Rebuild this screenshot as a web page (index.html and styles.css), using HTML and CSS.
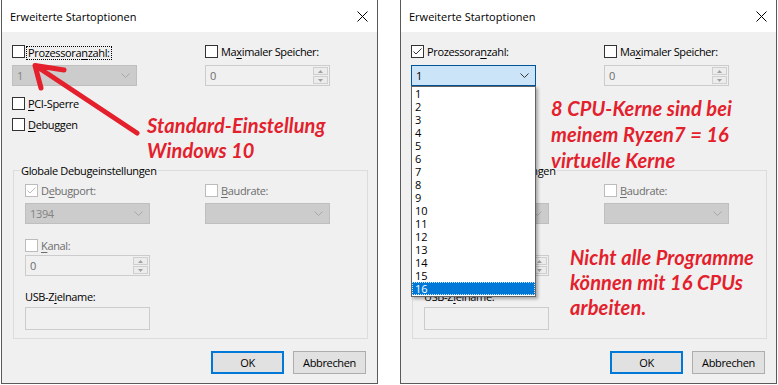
FILE: index.html
```html
<!DOCTYPE html>
<html lang="de">
<head>
<meta charset="utf-8">
<title>Erweiterte Startoptionen</title>
<link rel="stylesheet" href="styles.css">
</head>
<body>
<div class="screen">
  <section class="dialog">
    <header class="titlebar">
      <span class="title">Erweiterte Startoptionen</span>
      <svg class="close" width="11" height="11" viewBox="0 0 11 11"><path d="M0.5 0.5L10.5 10.5M10.5 0.5L0.5 10.5" stroke="#000" stroke-width="1"/></svg>
    </header>
    <div class="body">
      <div class="row ra">
        <label class="cb"><span class="box"></span><span class="lbl focus">Prozessora<u>n</u>zahl:</span></label>
        <label class="cb"><span class="box"></span><span class="lbl">Ma<u>x</u>imaler Speicher:</span></label>
      </div>
      <div class="row rb">
        <div class="combo off"><span class="val">1</span><svg class="chev" width="9" height="5" viewBox="0 0 9 5"><path d="M0.5 0.5L4.5 4.5L8.5 0.5" fill="none" stroke="currentColor"/></svg></div>
        <div class="spin off"><span class="val">0</span><span class="spinbtns"><span class="sb"><svg width="5" height="3" viewBox="0 0 5 3"><path d="M2.5 0L5 3H0Z" fill="currentColor"/></svg></span><span class="sb"><svg width="5" height="3" viewBox="0 0 5 3"><path d="M0 0H5L2.5 3Z" fill="currentColor"/></svg></span></span></div>
      </div>
      <div class="row rc"><label class="cb"><span class="box"></span><span class="lbl"><u>P</u>CI-Sperre</span></label></div>
      <div class="row rd"><label class="cb"><span class="box"></span><span class="lbl"><u>D</u>ebuggen</span></label></div>
      <div class="group">
        <span class="legend">Globale Debugeinstellungen</span>
        <div class="grow g1">
          <label class="cb off"><span class="box"><svg width="11" height="11" viewBox="0 0 11 11"><path d="M1.5 5.5L4 8L9.5 2.5" fill="none" stroke="currentColor"/></svg></span><span class="lbl">D<u>e</u>bugport:</span></label>
          <label class="cb off"><span class="box"></span><span class="lbl"><u>B</u>audrate:</span></label>
        </div>
        <div class="grow g2">
          <div class="combo off"><span class="val">1394</span><svg class="chev" width="9" height="5" viewBox="0 0 9 5"><path d="M0.5 0.5L4.5 4.5L8.5 0.5" fill="none" stroke="currentColor"/></svg></div>
          <div class="combo off"><span class="val"></span><svg class="chev" width="9" height="5" viewBox="0 0 9 5"><path d="M0.5 0.5L4.5 4.5L8.5 0.5" fill="none" stroke="currentColor"/></svg></div>
        </div>
        <div class="grow g3"><label class="cb off"><span class="box"></span><span class="lbl"><u>K</u>anal:</span></label></div>
        <div class="grow g4">
          <div class="spin off"><span class="val">0</span><span class="spinbtns"><span class="sb"><svg width="5" height="3" viewBox="0 0 5 3"><path d="M2.5 0L5 3H0Z" fill="currentColor"/></svg></span><span class="sb"><svg width="5" height="3" viewBox="0 0 5 3"><path d="M0 0H5L2.5 3Z" fill="currentColor"/></svg></span></span></div>
        </div>
        <div class="grow g5"><span class="plain">USB-Z<u>i</u>elname:</span></div>
        <div class="grow g6"><div class="edit off"></div></div>
      </div>
      <div class="buttons"><button class="btn def">OK</button><button class="btn">Abbrechen</button></div>
    </div>
    <svg class="arrow" width="160" height="150" viewBox="0 0 160 150"><path d="M137 133L36 66M64 70L35 65.5L41 88" fill="none" stroke="#e3202b" stroke-width="5" stroke-linecap="round" stroke-linejoin="round"/></svg>
    <div class="note note-l">Standard-Einstellung<br>Windows 10</div>
  </section>

  <section class="dialog">
    <header class="titlebar">
      <span class="title">Erweiterte Startoptionen</span>
      <svg class="close" width="11" height="11" viewBox="0 0 11 11"><path d="M0.5 0.5L10.5 10.5M10.5 0.5L0.5 10.5" stroke="#000" stroke-width="1"/></svg>
    </header>
    <div class="body">
      <div class="row ra">
        <label class="cb"><span class="box on"><svg width="11" height="11" viewBox="0 0 11 11"><path d="M1.5 5.5L4 8L9.5 2.5" fill="none" stroke="currentColor"/></svg></span><span class="lbl">Prozessora<u>n</u>zahl:</span></label>
        <label class="cb"><span class="box"></span><span class="lbl">Ma<u>x</u>imaler Speicher:</span></label>
      </div>
      <div class="row rb">
        <div class="combo active"><span class="val">1</span><svg class="chev" width="9" height="5" viewBox="0 0 9 5"><path d="M0.5 0.5L4.5 4.5L8.5 0.5" fill="none" stroke="currentColor"/></svg></div>
        <div class="spin off"><span class="val">0</span><span class="spinbtns"><span class="sb"><svg width="5" height="3" viewBox="0 0 5 3"><path d="M2.5 0L5 3H0Z" fill="currentColor"/></svg></span><span class="sb"><svg width="5" height="3" viewBox="0 0 5 3"><path d="M0 0H5L2.5 3Z" fill="currentColor"/></svg></span></span></div>
      </div>
      <div class="row rc"><label class="cb"><span class="box"></span><span class="lbl"><u>P</u>CI-Sperre</span></label></div>
      <div class="row rd"><label class="cb"><span class="box"></span><span class="lbl"><u>D</u>ebuggen</span></label></div>
      <div class="group">
        <span class="legend">Globale Debugeinstellungen</span>
        <div class="grow g1">
          <label class="cb off"><span class="box"><svg width="11" height="11" viewBox="0 0 11 11"><path d="M1.5 5.5L4 8L9.5 2.5" fill="none" stroke="currentColor"/></svg></span><span class="lbl">D<u>e</u>bugport:</span></label>
          <label class="cb off"><span class="box"></span><span class="lbl"><u>B</u>audrate:</span></label>
        </div>
        <div class="grow g2">
          <div class="combo off"><span class="val">1394</span><svg class="chev" width="9" height="5" viewBox="0 0 9 5"><path d="M0.5 0.5L4.5 4.5L8.5 0.5" fill="none" stroke="currentColor"/></svg></div>
          <div class="combo off"><span class="val"></span><svg class="chev" width="9" height="5" viewBox="0 0 9 5"><path d="M0.5 0.5L4.5 4.5L8.5 0.5" fill="none" stroke="currentColor"/></svg></div>
        </div>
        <div class="grow g3"><label class="cb off"><span class="box"></span><span class="lbl"><u>K</u>anal:</span></label></div>
        <div class="grow g4">
          <div class="spin off"><span class="val">0</span><span class="spinbtns"><span class="sb"><svg width="5" height="3" viewBox="0 0 5 3"><path d="M2.5 0L5 3H0Z" fill="currentColor"/></svg></span><span class="sb"><svg width="5" height="3" viewBox="0 0 5 3"><path d="M0 0H5L2.5 3Z" fill="currentColor"/></svg></span></span></div>
        </div>
        <div class="grow g5"><span class="plain">USB-Z<u>i</u>elname:</span></div>
        <div class="grow g6"><div class="edit off"></div></div>
      </div>
      <div class="buttons"><button class="btn def">OK</button><button class="btn">Abbrechen</button></div>
    </div>
    <ul class="dropdown">
      <li>1</li><li>2</li><li>3</li><li>4</li><li>5</li><li>6</li><li>7</li><li>8</li>
      <li>9</li><li>10</li><li>11</li><li>12</li><li>13</li><li>14</li><li>15</li><li class="sel">16</li>
    </ul>
    <div class="note note-r1">8 CPU-Kerne sind bei<br>meinem Ryzen7 = 16<br>virtuelle Kerne</div>
    <div class="note note-r2">Nicht alle Programme<br>können mit 16 CPUs<br>arbeiten.</div>
  </section>
</div>
</body>
</html>
```

FILE: styles.css
```css
* { box-sizing: border-box; }
body { margin: 0; background: #fff; font-family: "Open Sans", "Noto Sans", sans-serif; font-size: 11px; letter-spacing: -0.35px; color: #000; }
.screen { display: flex; gap: 22px; padding-left: 1px; width: 778px; height: 385px; overflow: hidden; }
.dialog { position: relative; flex: none; width: 377px; height: 384px; border: 1px solid #5a5a5a; border-top: none; background: #f0f0f0; display: flex; flex-direction: column; }
.titlebar { height: 32px; flex: none; background: #fff; display: flex; align-items: center; justify-content: space-between; padding: 0 9px 0 8px; }
.title { line-height: 15px; letter-spacing: 0; }
.body { padding: 0 10px; display: flex; flex-direction: column; }
.row { display: grid; grid-template-columns: 193px 125px; }
.grow { display: grid; grid-template-columns: 180px 125px; }
.ra { margin-top: 12px; }
.rb { margin-top: 6px; }
.rc { margin-top: 10px; }
.rd { margin-top: 6px; }
.cb { display: flex; align-items: center; height: 15px; gap: 3px; }
.box { width: 13px; height: 13px; flex: none; border: 1px solid #333; background: #fff; color: #333; display: flex; }
.cb.off .box { border-color: #bcbcbc; color: #bcbcbc; }
.cb.off .lbl { color: #6d6d6d; }
.lbl { line-height: 15px; white-space: nowrap; }
.focus { outline: 1px dotted #000; outline-offset: 0; line-height: 12px; margin-top: 2px; padding: 0 1px; margin-left: -1px; }
u { text-decoration-thickness: 1px; text-underline-offset: 2px; }
.combo { width: 125px; height: 21px; display: flex; align-items: center; justify-content: space-between; padding: 0 6px 0 4px; border: 1px solid #bfbfbf; background: #cccccc; color: #838383; }
.combo .chev { color: #a8a8a8; }
.combo.active { background: #cce4f7; border-color: #005499; color: #000; }
.combo.active .chev { color: #333; }
.spin { width: 125px; height: 21px; display: flex; align-items: center; justify-content: space-between; padding: 0 1px 0 4px; border: 1px solid #cccccc; background: #f0f0f0; color: #6d6d6d; }
.spinbtns { display: flex; flex-direction: column; gap: 1px; width: 15px; height: 17px; }
.sb { flex: 1; border: 1px solid #cfcfcf; background: #ececec; color: #a0a0a0; display: flex; align-items: center; justify-content: center; }
.group { margin: 38px 0 0 1px; width: 355px; border: 1px solid #dcdcdc; padding: 0 0 8px 11px; display: flex; flex-direction: column; }
.legend { align-self: flex-start; margin: -8px 0 0 -5px; padding: 0 1px; line-height: 15px; background: #f0f0f0; }
.g1 { margin-top: 5px; }
.g2 { margin-top: 5px; }
.g3 { margin-top: 14px; }
.g4 { margin-top: 2px; }
.g5 { margin-top: 13px; }
.g6 { margin-top: 3px; }
.plain { line-height: 15px; }
.edit { width: 125px; height: 23px; border: 1px solid #cccccc; background: #f0f0f0; }
.buttons { margin-top: 12px; display: flex; justify-content: flex-end; gap: 9px; padding-right: 1px; }
.btn { width: 73px; height: 23px; border: 1px solid #adadad; background: #e1e1e1; font: inherit; letter-spacing: inherit; color: #000; padding: 0; }
.btn.def { border: 2px solid #0078d7; }
.arrow { position: absolute; left: -2px; top: 0; }
.note { position: absolute; font-family: "Lato", sans-serif; font-weight: 700; font-style: italic; font-size: 20px; letter-spacing: 0.1px; line-height: 25px; color: #e3202b; white-space: nowrap; }
.note-l { left: 145px; top: 113px; }
.note-r1 { left: 150px; top: 95px; line-height: 26px; }
.note-r2 { left: 169px; top: 245px; }
.dropdown { position: absolute; left: 10px; top: 86px; width: 125px; height: 211px; margin: 0; padding: 0; list-style: none; background: #fff; border: 1px solid #646464; box-shadow: 2px 2px 3px rgba(0,0,0,0.3); letter-spacing: 0; }
.dropdown li { height: 13px; line-height: 13px; padding-left: 3px; }
.dropdown li.sel { background: #0078d7; color: #fff; outline: 1px dotted #cfe6ff; outline-offset: -1px; }
```
